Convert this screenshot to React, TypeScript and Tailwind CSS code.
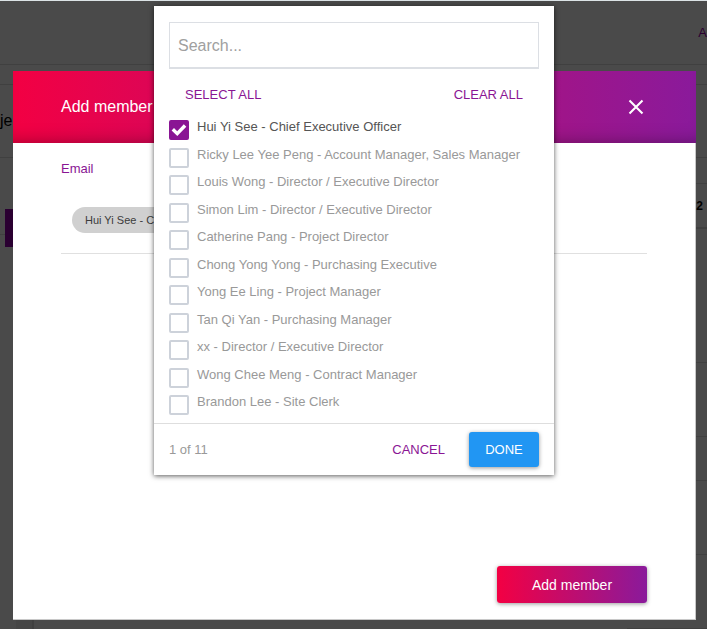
import { useState } from "react";

const people = [
  "Hui Yi See - Chief Executive Officer",
  "Ricky Lee Yee Peng - Account Manager, Sales Manager",
  "Louis Wong - Director / Executive Director",
  "Simon Lim - Director / Executive Director",
  "Catherine Pang - Project Director",
  "Chong Yong Yong - Purchasing Executive",
  "Yong Ee Ling - Project Manager",
  "Tan Qi Yan - Purchasing Manager",
  "xx - Director / Executive Director",
  "Wong Chee Meng - Contract Manager",
  "Brandon Lee - Site Clerk",
];

function Backdrop() {
  return (
    <div className="flex min-h-screen flex-col bg-[#4a4a4a] text-black">
      <div className="h-px bg-[#dce3e6]" />
      <header className="flex h-16 items-center justify-end border-b border-[#404040] text-[13px] text-[#2a0030]">
        A
      </header>
      <div className="h-5 border-b border-[#404040]" />
      <div className="flex grow justify-between">
        <div className="flex w-20 flex-col">
          <div className="flex h-[73px] items-center border-b border-[#404040] text-base">je</div>
          <div className="h-[51px]" />
          <div className="flex h-[38px] bg-linear-to-b from-[#4a4a4a] from-65% via-[#404040] via-67% to-[#4a4a4a] to-69% pl-[5px]">
            <div className="h-full w-10 bg-[#2a0031]" />
          </div>
          <div className="mt-auto h-3 pl-4">
            <div className="h-full w-[18px] border-r-2 border-[#404040] bg-[#464646]" />
          </div>
        </div>
        <div className="flex w-20 flex-col">
          <div className="h-[73px] border-b border-[#404040]" />
          <div className="h-[26px] border-b border-[#404040]" />
          <div className="flex h-[45px] items-center justify-end border-b-2 border-[#404040] pr-1 text-xs font-bold">
            2
          </div>
          <div className="h-[134px] border-b border-[#404040]" />
          <div className="h-[74px] border-b border-[#404040]" />
          <div className="h-11 border-b border-[#404040]" />
          <div className="h-[74px] border-b border-[#404040]" />
          <div className="h-[74px] border-b border-[#404040]" />
        </div>
      </div>
    </div>
  );
}

function MemberDialog() {
  return (
    <section className="flex h-full flex-col border-r border-b border-[#c8c8c8] bg-white">
      <header className="-mr-px flex h-[72px] shrink-0 items-center justify-between bg-linear-to-r/srgb from-[#f30043] to-[#8a1a9b] pr-[52px] pl-12 text-white shadow-[inset_0_-14px_18px_-14px_rgba(0,0,0,0.35)]">
        <h1 className="text-base">Add member</h1>
        <button type="button" aria-label="Close">
          <svg className="size-4" viewBox="0 0 16 16" fill="none" stroke="currentColor" strokeWidth="2.1">
            <path d="M1.5 1.5 14.5 14.5M14.5 1.5 1.5 14.5" />
          </svg>
        </button>
      </header>
      <div className="flex grow flex-col px-12 pt-4 pb-4">
        <h2 className="text-[13px] leading-5 text-[#8a1594]">Email</h2>
        <div className="border-b border-[#e0e0e0] px-[11px] pt-7 pb-5">
          <span className="inline-flex h-[26px] items-center rounded-full bg-[#d0d0d0] px-[13px] align-top text-[11px] text-[#3c3c3c]">
            Hui Yi See - Chief Executive Officer
          </span>
        </div>
        <button
          type="button"
          className="mt-auto h-[37px] w-[150px] self-end rounded-[3px] bg-linear-to-r/srgb from-[#f30043] to-[#8a1a9b] text-sm text-white shadow-[0_1px_4px_rgba(0,0,0,0.4)]"
        >
          Add member
        </button>
      </div>
    </section>
  );
}

function PeoplePicker() {
  const [picked, setPicked] = useState<string[]>([people[0]]);
  const toggle = (name: string) =>
    setPicked((old) => (old.includes(name) ? old.filter((n) => n !== name) : [...old, name]));

  return (
    <section className="w-[400px] bg-white text-[13px] text-[#999999] shadow-[0_1px_5px_rgba(0,0,0,0.65)]">
      <div className="px-[15px] pt-4">
        <input
          type="text"
          aria-label="Search"
          placeholder="Search..."
          className="block h-[47px] w-full border border-b-2 border-[#dcdfe4] px-2 pt-0.5 text-base text-[#555555] placeholder:text-[#a0a0a0]"
        />
        <div className="flex justify-between px-4 pt-4 text-[#8a1594]">
          <button type="button" className="leading-5" onClick={() => setPicked(people)}>
            SELECT ALL
          </button>
          <button type="button" className="leading-5" onClick={() => setPicked([])}>
            CLEAR ALL
          </button>
        </div>
        <div className="mt-[15px] grid h-[303px] grid-rows-11">
          {people.map((name) => {
            const on = picked.includes(name);
            return (
              <label key={name} className="flex items-start gap-2">
                <span className="grid size-5 shrink-0">
                  <input
                    type="checkbox"
                    checked={on}
                    onChange={() => toggle(name)}
                    className="col-start-1 row-start-1 size-5 appearance-none rounded-xs border-2 border-[#cdd2da] bg-white checked:border-[#8a1594] checked:bg-[#8a1594]"
                  />
                  {on && (
                    <svg
                      className="pointer-events-none col-start-1 row-start-1 size-5"
                      viewBox="0 0 20 20"
                      fill="white"
                    >
                      <path d="M2.6 10.4 5 8.1 8.2 11.2 14.8 4.3 17.3 6.7 8.3 16.1Z" />
                    </svg>
                  )}
                </span>
                <span className={on ? "leading-[14px] text-[#555555]" : "leading-[14px]"}>{name}</span>
              </label>
            );
          })}
        </div>
      </div>
      <footer className="flex items-center border-t border-[#dedede] px-[15px] py-2">
        <span className="grow">{picked.length} of {people.length}</span>
        <button type="button" className="h-[35px] px-6 text-[#8a1594]">
          CANCEL
        </button>
        <button
          type="button"
          className="h-[35px] w-[70px] rounded-[3px] bg-[#2196f3] text-white shadow-[0_1px_4px_rgba(0,0,0,0.4)]"
        >
          DONE
        </button>
      </footer>
    </section>
  );
}

export default function App() {
  return (
    <main className="relative min-h-screen overflow-hidden font-['Liberation_Sans',Arial,sans-serif]">
      <Backdrop />
      <div className="absolute inset-0 pt-[71px] pr-[11px] pb-[9px] pl-[13px]">
        <MemberDialog />
      </div>
      <div className="absolute inset-x-0 top-0 flex justify-center pt-1.5 pl-px">
        <PeoplePicker />
      </div>
    </main>
  );
}
